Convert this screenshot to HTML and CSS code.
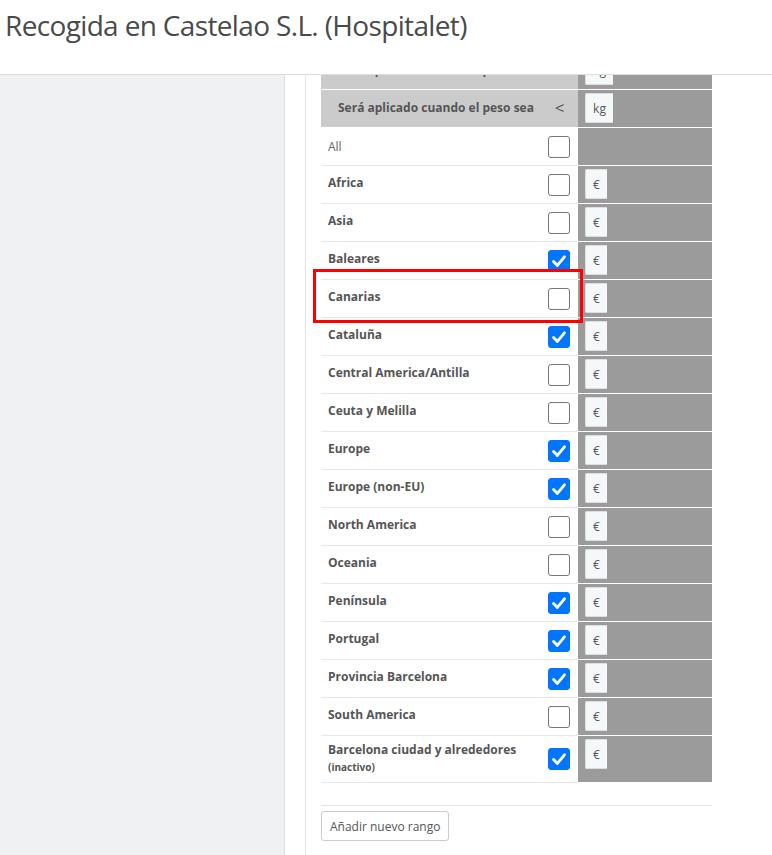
FILE: index.html
```html
<!DOCTYPE html>
<html lang="es">
<head>
<meta charset="utf-8">
<title>Recogida en Castelao S.L. (Hospitalet)</title>
<link rel="stylesheet" href="styles.css">
</head>
<body>
<header class="page-head">
  <h2 class="title">Recogida en Castelao S.L. (Hospitalet)</h2>
</header>
<div class="main">
  <aside class="sidebar"></aside>
  <div class="gutter"></div>
  <section class="panel">
    <div class="ranges">
      <div class="row row-head">
        <div class="c-name">Será aplicado cuando el peso sea</div>
        <div class="c-check sym"></div>
        <div class="c-price"><span class="addon addon-kg">kg</span></div>
      </div>
      <div class="row row-head">
        <div class="c-name">Será aplicado cuando el peso sea</div>
        <div class="c-check sym">&lt;</div>
        <div class="c-price"><span class="addon addon-kg">kg</span></div>
      </div>
      <div class="row">
        <div class="c-name normal">All</div>
        <div class="c-check"><span class="cb"></span></div>
        <div class="c-price"></div>
      </div>
      <div class="row">
        <div class="c-name">Africa</div>
        <div class="c-check"><span class="cb"></span></div>
        <div class="c-price"><span class="addon">€</span></div>
      </div>
      <div class="row">
        <div class="c-name">Asia</div>
        <div class="c-check"><span class="cb"></span></div>
        <div class="c-price"><span class="addon">€</span></div>
      </div>
      <div class="row">
        <div class="c-name">Baleares</div>
        <div class="c-check"><span class="cb on"><svg viewBox="0 0 22 22"><path d="M5 11.5 L9.2 15.8 L17 6.5" /></svg></span></div>
        <div class="c-price"><span class="addon">€</span></div>
      </div>
      <div class="row">
        <div class="c-name">Canarias</div>
        <div class="c-check"><span class="cb"></span></div>
        <div class="c-price"><span class="addon">€</span></div>
      </div>
      <div class="row">
        <div class="c-name">Cataluña</div>
        <div class="c-check"><span class="cb on"><svg viewBox="0 0 22 22"><path d="M5 11.5 L9.2 15.8 L17 6.5" /></svg></span></div>
        <div class="c-price"><span class="addon">€</span></div>
      </div>
      <div class="row">
        <div class="c-name">Central America/Antilla</div>
        <div class="c-check"><span class="cb"></span></div>
        <div class="c-price"><span class="addon">€</span></div>
      </div>
      <div class="row">
        <div class="c-name">Ceuta y Melilla</div>
        <div class="c-check"><span class="cb"></span></div>
        <div class="c-price"><span class="addon">€</span></div>
      </div>
      <div class="row">
        <div class="c-name">Europe</div>
        <div class="c-check"><span class="cb on"><svg viewBox="0 0 22 22"><path d="M5 11.5 L9.2 15.8 L17 6.5" /></svg></span></div>
        <div class="c-price"><span class="addon">€</span></div>
      </div>
      <div class="row">
        <div class="c-name">Europe (non-EU)</div>
        <div class="c-check"><span class="cb on"><svg viewBox="0 0 22 22"><path d="M5 11.5 L9.2 15.8 L17 6.5" /></svg></span></div>
        <div class="c-price"><span class="addon">€</span></div>
      </div>
      <div class="row">
        <div class="c-name">North America</div>
        <div class="c-check"><span class="cb"></span></div>
        <div class="c-price"><span class="addon">€</span></div>
      </div>
      <div class="row">
        <div class="c-name">Oceania</div>
        <div class="c-check"><span class="cb"></span></div>
        <div class="c-price"><span class="addon">€</span></div>
      </div>
      <div class="row">
        <div class="c-name">Península</div>
        <div class="c-check"><span class="cb on"><svg viewBox="0 0 22 22"><path d="M5 11.5 L9.2 15.8 L17 6.5" /></svg></span></div>
        <div class="c-price"><span class="addon">€</span></div>
      </div>
      <div class="row">
        <div class="c-name">Portugal</div>
        <div class="c-check"><span class="cb on"><svg viewBox="0 0 22 22"><path d="M5 11.5 L9.2 15.8 L17 6.5" /></svg></span></div>
        <div class="c-price"><span class="addon">€</span></div>
      </div>
      <div class="row">
        <div class="c-name">Provincia Barcelona</div>
        <div class="c-check"><span class="cb on"><svg viewBox="0 0 22 22"><path d="M5 11.5 L9.2 15.8 L17 6.5" /></svg></span></div>
        <div class="c-price"><span class="addon">€</span></div>
      </div>
      <div class="row">
        <div class="c-name">South America</div>
        <div class="c-check"><span class="cb"></span></div>
        <div class="c-price"><span class="addon">€</span></div>
      </div>
      <div class="row row-tall">
        <div class="c-name">Barcelona ciudad y alrededores<small class="inactive">(inactivo)</small></div>
        <div class="c-check"><span class="cb on"><svg viewBox="0 0 22 22"><path d="M5 11.5 L9.2 15.8 L17 6.5" /></svg></span></div>
        <div class="c-price"><span class="addon">€</span></div>
      </div>
    </div>
    <div class="foot">
      <button class="btn" type="button">Añadir nuevo rango</button>
    </div>
    <div class="highlight"></div>
  </section>
</div>
</body>
</html>
```
FILE: styles.css
```css
* { box-sizing: border-box; }

html, body {
  margin: 0;
  padding: 0;
  background: #fff;
}

body {
  font-family: "Open Sans", "DejaVu Sans", sans-serif;
  color: #555;
  height: 855px;
  overflow: hidden;
}

.page-head {
  height: 75px;
  border-bottom: 1px solid #dddddd;
  padding: 0 5px;
}

.title {
  margin: 0;
  padding-top: 5px;
  font-family: "Open Sans", sans-serif;
  font-weight: normal;
  font-size: 28px;
  letter-spacing: -0.65px;
  line-height: 40px;
  color: #4a4a4a;
}

.main {
  display: flex;
  height: 780px;
}

.sidebar {
  width: 285px;
  flex: none;
  background: #eff1f2;
  border-right: 1px solid #dcdcdc;
}

.gutter {
  width: 20px;
  flex: none;
}

.panel {
  position: relative;
  flex: 1;
  border-left: 1px solid #e4e4e4;
  padding-left: 15px;
  overflow: hidden;
}

.ranges {
  width: 391px;
  margin-top: -23px;
}

.row {
  display: flex;
  height: 38px;
}

.row-tall {
  height: 47px;
}

.c-name {
  width: 220px;
  flex: none;
  padding: 0 7px;
  display: flex;
  flex-direction: column;
  justify-content: center;
  font-size: 12px;
  font-weight: bold;
  line-height: 18px;
  border-bottom: 1px solid #e8e8e8;
  padding-bottom: 3px;
}

.c-name.normal {
  font-weight: normal;
  color: #666;
  padding-bottom: 0;
  padding-top: 1px;
}

.inactive {
  font-size: 10px;
  line-height: 16px;
  font-weight: bold;
}

.c-check {
  width: 37px;
  flex: none;
  display: flex;
  align-items: center;
  justify-content: center;
  border-bottom: 1px solid #e8e8e8;
}

.c-price {
  width: 134px;
  flex: none;
  background: #9b9b9b;
  border-bottom: 1px solid #fff;
  padding: 3px 7px 0;
}

.row-head .c-name,
.row-head .c-check {
  background: #cbcbcb;
  border-bottom-color: #fff;
}

.row-head .c-name {
  padding-left: 17px;
  padding-bottom: 1px;
}

.sym {
  font-size: 17px;
  font-weight: normal;
  color: #555;
  padding-bottom: 3px;
}

.cb {
  width: 22px;
  height: 22px;
  border: 1px solid #767676;
  border-radius: 3px;
  background: #fff;
  display: block;
  margin-right: 1px;
}

.cb.on {
  background: #0075ff;
  border-color: #0075ff;
}

.cb svg {
  display: block;
  width: 20px;
  height: 20px;
}

.cb svg path {
  fill: none;
  stroke: #fff;
  stroke-width: 3.2;
  stroke-linecap: round;
  stroke-linejoin: round;
}

.addon {
  width: 22px;
  height: 30px;
  display: flex;
  align-items: center;
  justify-content: center;
  background: #f5f8f9;
  border: 1px solid #dcdfe1;
  border-right: none;
  border-radius: 2px 0 0 2px;
  font-size: 12px;
  color: #555;
}

.addon-kg {
  width: 28px;
}

.foot {
  width: 391px;
  margin-top: 22px;
  border-top: 1px solid #e4e4e4;
  padding-top: 5px;
}

.btn {
  height: 30px;
  padding: 0 8px;
  font-family: "Open Sans", sans-serif;
  font-size: 12px;
  color: #555;
  background: #fff;
  border: 1px solid #cccccc;
  border-radius: 3px;
}

.highlight {
  position: absolute;
  left: 7px;
  top: 194px;
  width: 270px;
  height: 54px;
  border: 3px solid #ff0000;
}
```
